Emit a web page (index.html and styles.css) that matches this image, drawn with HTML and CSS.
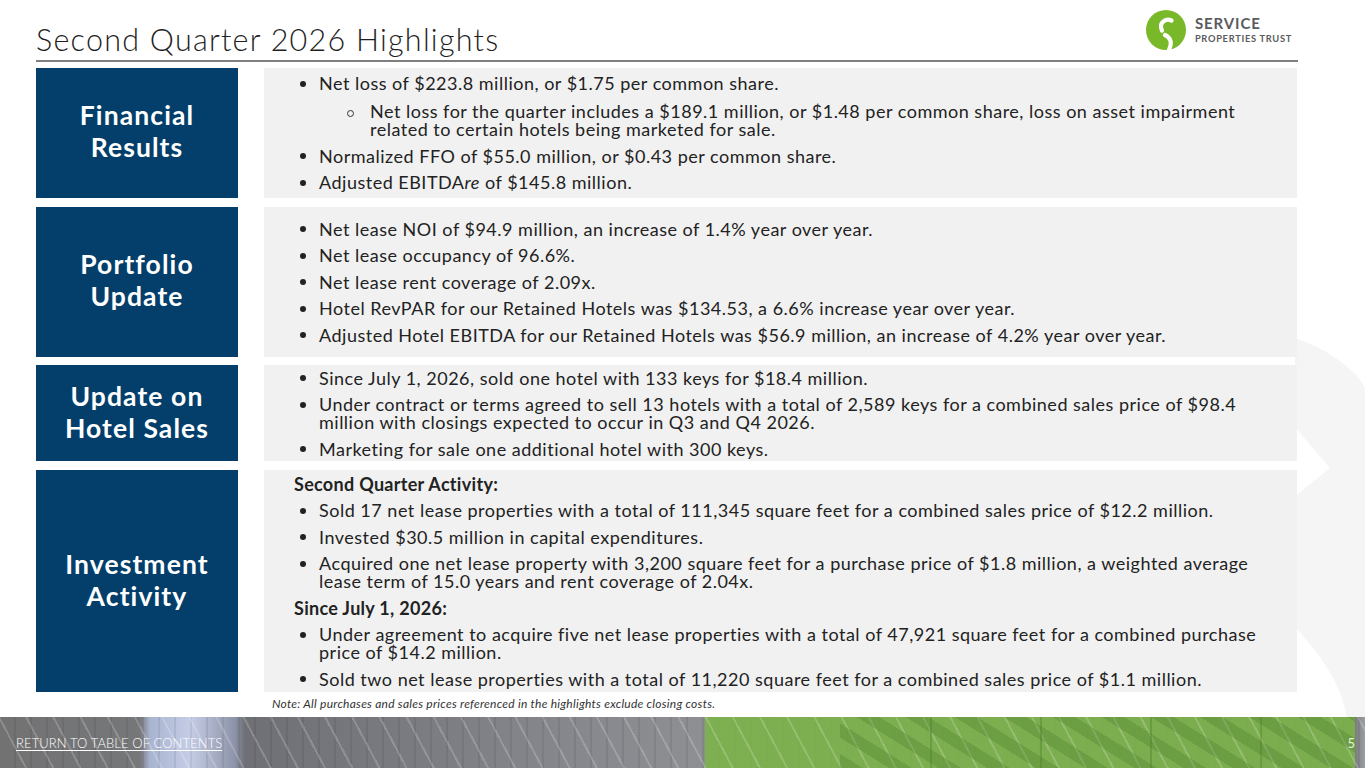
FILE: index.html
```html
<!DOCTYPE html>
<html lang="en">
<head>
<meta charset="utf-8">
<title>Second Quarter 2026 Highlights</title>
<link rel="stylesheet" href="styles.css">
</head>
<body>
<div class="slide">
  <svg class="swoosh" width="80" height="400" viewBox="0 0 80 400" aria-hidden="true">
    <path d="M10 20 C40 30 70 50 80 70 L80 400 L10 400 Z" fill="#f5f5f5"/>
    <path d="M2 100 L45 150 L2 185 Z" fill="#ffffff"/>
    <path d="M2 300 C30 330 55 360 62 400 L2 400 Z" fill="#ffffff"/>
  </svg>

  <header class="top">
    <h1 class="title">Second Quarter 2026 Highlights</h1>
    <div class="logo">
      <svg class="logo-mark" width="40" height="40" viewBox="0 0 40 40" aria-hidden="true">
        <circle cx="20" cy="20" r="20" fill="#79b929"/>
        <path d="M25.5 10.5 C19 7.5 12.5 13.5 16 20.5" fill="none" stroke="#fff" stroke-width="4.2" stroke-linecap="round"/>
        <path d="M19 25 C24.5 27.5 26.5 32.5 23 40" fill="none" stroke="#fff" stroke-width="4.2" stroke-linecap="round"/>
      </svg>
      <div class="logo-text">
        <span class="logo-big">SERVICE</span>
        <span class="logo-small">PROPERTIES TRUST</span>
      </div>
    </div>
  </header>
  <div class="rule"></div>

  <main class="grid">
    <div class="label"><span>Financial<br>Results</span></div>
    <div class="content">
      <ul class="bullets">
        <li>Net loss of $223.8 million, or $1.75 per common share.</li>
        <li class="sub">Net loss for the quarter includes a $189.1 million, or $1.48 per common share, loss on asset impairment related to certain hotels being marketed for sale.</li>
        <li>Normalized FFO of $55.0 million, or $0.43 per common share.</li>
        <li>Adjusted EBITDA<em>re</em> of $145.8 million.</li>
      </ul>
    </div>

    <div class="label"><span>Portfolio<br>Update</span></div>
    <div class="content">
      <ul class="bullets">
        <li>Net lease NOI of $94.9 million, an increase of 1.4% year over year.</li>
        <li>Net lease occupancy of 96.6%.</li>
        <li>Net lease rent coverage of 2.09x.</li>
        <li>Hotel RevPAR for our Retained Hotels was $134.53, a 6.6% increase year over year.</li>
        <li>Adjusted Hotel EBITDA for our Retained Hotels was $56.9 million, an increase of 4.2% year over year.</li>
      </ul>
    </div>

    <div class="label"><span>Update on<br>Hotel Sales</span></div>
    <div class="content">
      <ul class="bullets">
        <li>Since July 1, 2026, sold one hotel with 133 keys for $18.4 million.</li>
        <li>Under contract or terms agreed to sell 13 hotels with a total of 2,589 keys for a combined sales price of $98.4 million with closings expected to occur in Q3 and Q4 2026.</li>
        <li>Marketing for sale one additional hotel with 300 keys.</li>
      </ul>
    </div>

    <div class="label"><span>Investment<br>Activity</span></div>
    <div class="content">
      <ul class="bullets">
        <li class="head">Second Quarter Activity:</li>
        <li>Sold 17 net lease properties with a total of 111,345 square feet for a combined sales price of $12.2 million.</li>
        <li>Invested $30.5 million in capital expenditures.</li>
        <li>Acquired one net lease property with 3,200 square feet for a purchase price of $1.8 million, a weighted average lease term of 15.0 years and rent coverage of 2.04x.</li>
        <li class="head">Since July 1, 2026:</li>
        <li>Under agreement to acquire five net lease properties with a total of 47,921 square feet for a combined purchase price of $14.2 million.</li>
        <li>Sold two net lease properties with a total of 11,220 square feet for a combined sales price of $1.1 million.</li>
      </ul>
    </div>
  </main>

  <p class="note">Note: All purchases and sales prices referenced in the highlights exclude closing costs.</p>

  <footer class="footer">
    <a class="toc" href="#">RETURN TO TABLE OF CONTENTS</a>
    <span class="page">5</span>
  </footer>
</div>
</body>
</html>
```

FILE: styles.css
```css
* { box-sizing: border-box; }

html, body {
  margin: 0;
  padding: 0;
  background: #ffffff;
}

body {
  font-family: Lato, "Noto Sans", "Liberation Sans", sans-serif;
  color: #222222;
}

.slide {
  position: relative;
  width: 1365px;
  height: 768px;
  overflow: hidden;
  background: #ffffff;
  display: flex;
  flex-direction: column;
}

.swoosh {
  position: absolute;
  right: 0;
  top: 318px;
}

.top {
  position: relative;
  height: 60px;
  display: flex;
  justify-content: space-between;
  align-items: flex-end;
  padding: 0 73px 0 36px;
}

.title {
  margin: 0 0 3px 0;
  font-size: 30.5px;
  line-height: 36px;
  font-weight: 300;
  color: #1f1f1f;
  letter-spacing: 1.25px;
}

.logo {
  align-self: flex-start;
  margin-top: 10px;
  display: flex;
  align-items: center;
  gap: 9px;
}

.logo-mark { display: block; }

.logo-text {
  display: flex;
  flex-direction: column;
  color: #5a5b5d;
  font-weight: 700;
  line-height: 1;
}

.logo-big {
  font-size: 15px;
  letter-spacing: 0.9px;
}

.logo-small {
  margin-top: 3px;
  font-size: 9.3px;
  letter-spacing: 0.7px;
}

.rule {
  position: relative;
  margin: 0 67px 0 36px;
  height: 2px;
  background: #7f7f7f;
}

.grid {
  position: relative;
  margin: 6px 68px 0 36px;
  display: grid;
  grid-template-columns: 202px 1033px;
  grid-template-rows: 130px 150px 96px 222px;
  column-gap: 26px;
  row-gap: 8.7px;
}

.label {
  background: #033f6a;
  color: #ffffff;
  display: flex;
  align-items: center;
  justify-content: center;
  text-align: center;
  font-weight: 700;
  font-size: 26.5px;
  line-height: 32px;
  letter-spacing: 1.1px;
  padding-bottom: 3px;
}

.content {
  background: #f1f1f1;
  display: flex;
  flex-direction: column;
  justify-content: center;
  padding: 0 27px 0 0;
}

.bullets {
  list-style: none;
  margin: 0;
  padding: 0 0 0 55px;
  font-size: 18px;
  line-height: 18px;
  letter-spacing: 0.5px;
  color: #222222;
}

.bullets li {
  position: relative;
  margin-top: 8.5px;
}

.bullets li:first-child { margin-top: 0; }

.bullets li::before {
  content: "";
  position: absolute;
  left: -19px;
  top: 6.5px;
  width: 6px;
  height: 6px;
  border-radius: 50%;
  background: #222222;
}

.bullets li.sub {
  margin-left: 51px;
  margin-top: 10px;
  margin-bottom: 2px;
}

.bullets li.sub::before {
  left: -23px;
  top: 7.5px;
  width: 5px;
  height: 5px;
  background: transparent;
  border: 1px solid #333333;
}

.bullets li.head {
  margin-left: -25px;
  font-weight: 700;
  letter-spacing: 0.3px;
}

.bullets li.head::before { display: none; }

.bullets em { font-style: italic; }

.note {
  position: relative;
  margin: 5px 0 0 272px;
  height: 20px;
  font-size: 12px;
  line-height: 14px;
  font-style: italic;
  letter-spacing: 0.25px;
  color: #333333;
}

.footer {
  position: relative;
  margin-top: auto;
  height: 51px;
  display: flex;
  align-items: center;
  justify-content: space-between;
  padding: 0 10px 0 16px;
  background:
    repeating-linear-gradient(62deg, rgba(255,255,255,0) 0 22px, rgba(255,255,255,0.18) 22px 24px),
    linear-gradient(90deg, transparent 0 705px, rgba(123,181,70,0.85) 705px 1355px, transparent 1355px),
    repeating-linear-gradient(90deg, rgba(0,0,0,0) 0 14px, rgba(0,0,0,0.07) 14px 16px),
    linear-gradient(90deg, #727273 0, #767779 140px, #a9b4d0 150px, #c5cde6 190px, #8d93a8 235px, #6e7075 245px, #7a7c82 420px, #85878c 560px, #8d8f93 700px, #7b7e80 1355px, #9a9da3 1365px);
}

.footer::before {
  content: "";
  position: absolute;
  left: 840px;
  top: 0;
  width: 515px;
  height: 51px;
  background:
    repeating-linear-gradient(90deg, rgba(60,110,30,0) 0 90px, rgba(70,120,35,0.35) 90px 92px, rgba(70,120,35,0) 92px 110px),
    repeating-linear-gradient(32deg, rgba(60,110,30,0.25) 0 12px, rgba(130,190,80,0) 12px 26px);
}

.toc {
  position: relative;
  color: #ffffff;
  font-size: 13px;
  font-weight: 300;
  text-decoration: underline;
  text-underline-offset: 2px;
  letter-spacing: 0.1px;
}

.page {
  position: relative;
  color: #e8f2dc;
  font-size: 13px;
}
```
